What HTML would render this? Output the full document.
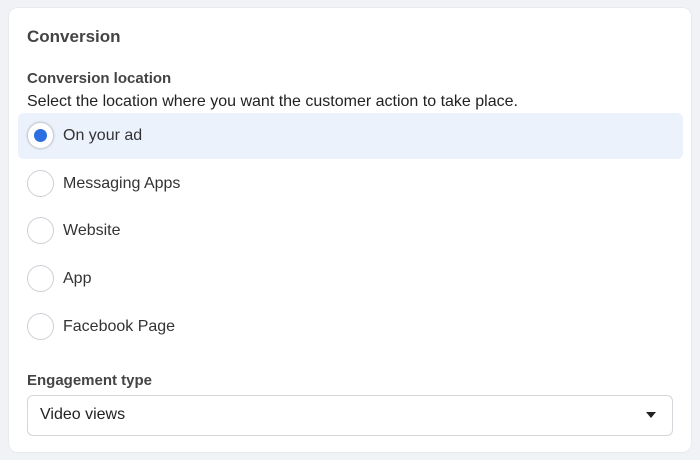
<!DOCTYPE html>
<html><head><style>
body{margin:0;width:700px;height:460px;background:#f0f2f5;font-family:"Liberation Sans",sans-serif;color:#1c1e21;position:relative;overflow:hidden}
.card{position:absolute;left:9px;top:8px;width:682px;height:444px;background:#fff;border-radius:8px;box-shadow:0 0 1px rgba(0,0,0,.2)}
.a{position:absolute;white-space:nowrap}
.h{font-weight:bold;color:#444}
.row{position:absolute;left:18px;width:665px;height:46px}
.sel{background:#ebf2fc;border-radius:6px}
.r{position:absolute;left:9px;top:9px;width:27px;height:27px;border:1px solid #ccd0d5;border-radius:50%;box-sizing:border-box;background:#fff}
.r i{position:absolute;left:6px;top:6px;width:13px;height:13px;border-radius:50%;background:#2d6fe0}
.row span{position:absolute;left:45px;top:14px;font-size:16px;color:#333}
</style></head><body>
<div class="card"></div>
<div class="a h" style="left:27px;top:27px;font-size:17px">Conversion</div>
<div class="a h" style="left:27px;top:70px;font-size:15px">Conversion location</div>
<div class="a" style="left:27px;top:93px;font-size:16px;color:#222">Select the location where you want the customer action to take place.</div>
<div class="row sel" style="top:113px"><div class="r" style="box-shadow:0 0 2px rgba(0,0,0,.2)"><i></i></div><span>On your ad</span></div>
<div class="row" style="top:161px"><div class="r"></div><span>Messaging Apps</span></div>
<div class="row" style="top:208px"><div class="r"></div><span>Website</span></div>
<div class="row" style="top:256px"><div class="r"></div><span>App</span></div>
<div class="row" style="top:304px"><div class="r"></div><span>Facebook Page</span></div>
<div class="a h" style="left:27px;top:372px;font-size:15px">Engagement type</div>
<div class="a" style="left:27px;top:395px;width:646px;height:41px;border:1px solid #d3d6da;border-radius:6px;box-sizing:border-box"></div>
<div class="a" style="left:40px;top:406px;font-size:16px;color:#222">Video views</div>
<svg class="a" style="left:645px;top:411px" width="12" height="8"><path d="M1 1h10L6 7z" fill="#222"/></svg>
</body></html>
